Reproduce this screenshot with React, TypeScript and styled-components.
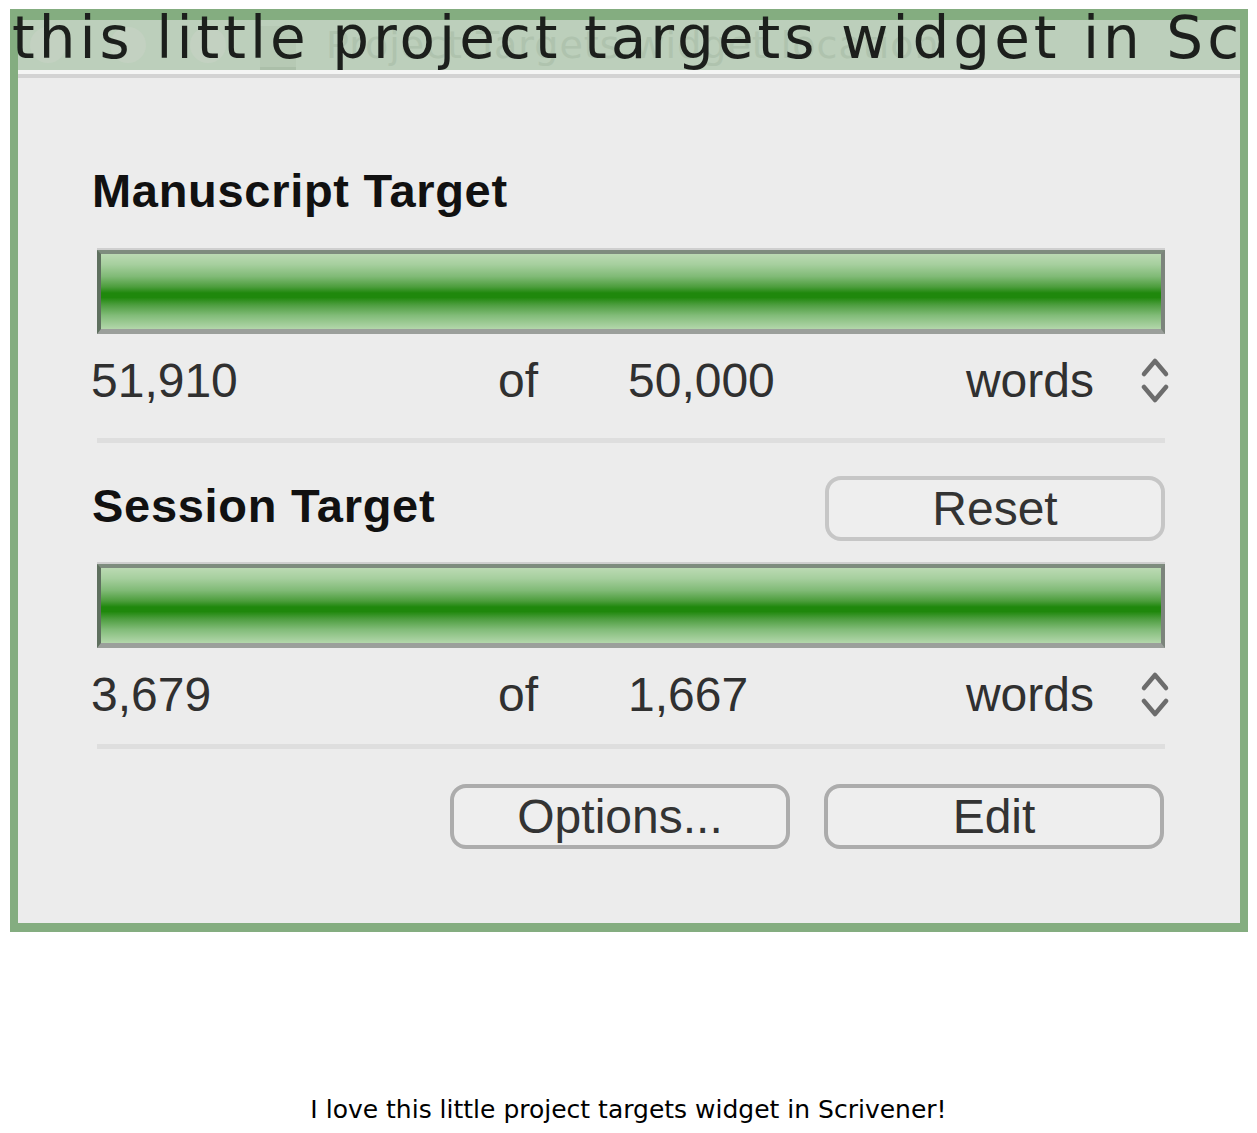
import styled, { createGlobalStyle } from "styled-components";

const GlobalStyle = createGlobalStyle`
  html, body {
    margin: 0;
    padding: 0;
    background: #ffffff;
  }
  * {
    box-sizing: border-box;
  }
`;

interface TargetData {
  title: string;
  count: string;
  target: string;
  withReset?: boolean;
}

const targets: TargetData[] = [
  { title: "Manuscript Target", count: "51,910", target: "50,000" },
  { title: "Session Target", count: "3,679", target: "1,667", withReset: true },
];

const Stepper = (): JSX.Element => (
  <StepperIcon width="32" height="48" viewBox="0 0 32 48">
    <polyline points="5,19 16,6 27,19" />
    <polyline points="5,32 16,45 27,32" />
  </StepperIcon>
);

const App = (): JSX.Element => {
  return (
    <>
      <GlobalStyle />
      <Page>
        <FrameWrap>
          <Frame>
            <TitleBar>
              <Lights>
                <Light />
                <Light />
                <Light />
              </Lights>
              <DocIcon />
              <GhostTitle>{"Project Targets widget location"}</GhostTitle>
            </TitleBar>
            <TitleEdge />

            <Panel>
              {targets.map((item, index) => (
                <Section key={item.title} $first={index === 0}>
                  <HeadRow>
                    <Heading $withButton={!!item.withReset}>{item.title}</Heading>
                    {item.withReset && <Button $light>{"Reset"}</Button>}
                  </HeadRow>
                  <Bar $top={item.withReset ? 23 : 32} />
                  <CountRow>
                    <Value>{item.count}</Value>
                    <Value>{"of"}</Value>
                    <Value>{item.target}</Value>
                    <Value>{"words"}</Value>
                    <Stepper />
                  </CountRow>
                  <Divider $top={index === 0 ? 30 : 22} />
                </Section>
              ))}
              <ButtonRow>
                <Button>{"Options..."}</Button>
                <Button>{"Edit"}</Button>
              </ButtonRow>
            </Panel>
          </Frame>
          <Overlay>{"this little project targets widget in Scrivener!"}</Overlay>
        </FrameWrap>
        <Caption>{"I love this little project targets widget in Scrivener!"}</Caption>
      </Page>
    </>
  );
};

const Page = styled.div`
  width: 1257px;
  padding: 9px 9px 0 10px;
`;

const FrameWrap = styled.div`
  position: relative;
  width: 1238px;
  overflow: hidden;
`;

const Frame = styled.div`
  width: 100%;
  border: 8px solid #84ad80;
  border-top-width: 11px;
  border-bottom-width: 9px;
  display: flex;
  flex-direction: column;
`;

const TitleBar = styled.div`
  height: 50px;
  background: #bccfbb;
  display: flex;
  align-items: center;
  padding-left: 12px;
  overflow: hidden;
`;

const Lights = styled.div`
  display: flex;
  gap: 44px;
`;

const Light = styled.span`
  width: 36px;
  height: 36px;
  border-radius: 50%;
  background: #c3d1c1;
`;

const DocIcon = styled.span`
  width: 36px;
  height: 44px;
  margin: 6px 0 0 34px;
  background: #b6c9b4;
  border-bottom: 3px solid #abbfa9;
`;

const GhostTitle = styled.span`
  margin-left: 30px;
  font-family: "DejaVu Sans", sans-serif;
  font-size: 38px;
  color: #afc3ae;
  letter-spacing: 1px;
  white-space: nowrap;
`;

const TitleEdge = styled.div`
  height: 8px;
  border-top: 4px solid #f4f5f4;
  background: #d3d3d3;
`;

const Overlay = styled.div`
  position: absolute;
  top: 0;
  left: 2px;
  font-family: "DejaVu Sans", sans-serif;
  font-size: 58px;
  line-height: 58px;
  letter-spacing: 4px;
  color: #1c1f1c;
  white-space: nowrap;
  pointer-events: none;
`;

const Panel = styled.div`
  background: #ececec;
  padding: 86px 75px 74px 73px;
  display: flex;
  flex-direction: column;
  font-family: "Liberation Sans", Arial, sans-serif;
`;

const Section = styled.div<{ $first: boolean }>`
  display: flex;
  flex-direction: column;
  margin-top: ${(p) => (p.$first ? 0 : 33)}px;
`;

const HeadRow = styled.div`
  display: flex;
  justify-content: space-between;
  align-items: flex-start;
`;

const Heading = styled.h2<{ $withButton: boolean }>`
  margin: ${(p) => (p.$withButton ? 3 : 0)}px 0 0 1px;
  font-size: 47px;
  line-height: 54px;
  letter-spacing: 0.7px;
  font-weight: bold;
  color: #111111;
`;

const Bar = styled.div<{ $top: number }>`
  margin: ${(p) => p.$top}px 0 0 6px;
  height: 84px;
  border-top: 4px solid #7e8c7e;
  border-left: 4px solid #5f705f;
  border-right: 4px solid #7c847c;
  border-bottom: 5px solid #9b9f9b;
  box-shadow: 0 -2px 0 #cfcfcf;
  background: linear-gradient(
    to bottom,
    #bbdab3 0%,
    #a6cf9e 14%,
    #80ba76 30%,
    #4c9d3c 44%,
    #1f880c 52%,
    #1f880c 58%,
    #4e9e40 68%,
    #82bc79 82%,
    #b3d7ab 100%
  );
`;

const CountRow = styled.div`
  margin: 19px -6px 0 0;
  display: grid;
  grid-template-columns: 407px 130px 1fr auto 32px;
  align-items: center;
`;

const Value = styled.span`
  font-size: 48px;
  line-height: 55px;
  color: #303030;

  &:nth-child(4) {
    margin-right: 45px;
  }
`;

const StepperIcon = styled.svg`
  fill: none;
  stroke: #6c6c6c;
  stroke-width: 4.5;
  stroke-linecap: round;
  stroke-linejoin: round;
  margin-top: -4px;
`;

const Divider = styled.div<{ $top: number }>`
  margin: ${(p) => p.$top}px 0 0 6px;
  height: 5px;
  background: #dedede;
`;

const ButtonRow = styled.div`
  margin-top: 35px;
  display: flex;
  justify-content: flex-end;
  gap: 34px;
  margin-right: 1px;
`;

const Button = styled.button<{ $light?: boolean }>`
  width: 340px;
  height: 65px;
  border: 4px solid ${(p) => (p.$light ? "#c6c6c6" : "#acacac")};
  border-radius: 16px;
  background: #eeeeee;
  font-family: "Liberation Sans", Arial, sans-serif;
  font-size: 48px;
  line-height: 1;
  color: #333333;
  padding: 0;
  display: flex;
  align-items: center;
  justify-content: center;
`;

const Caption = styled.p`
  margin: 163px 0 0 -10px;
  width: 1257px;
  text-align: center;
  font-family: "DejaVu Sans", sans-serif;
  font-size: 25px;
  line-height: 29px;
  color: #000000;
`;

export default App;
